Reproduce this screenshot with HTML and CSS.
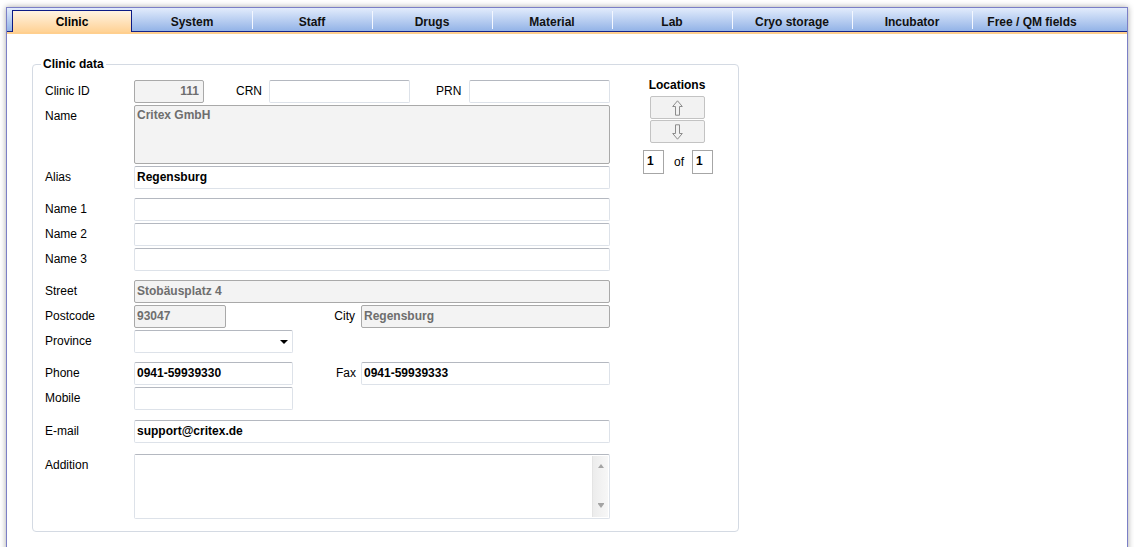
FILE: index.html
```html
<!DOCTYPE html>
<html>
<head>
  <title>Clinic settings</title>
  <meta charset="UTF-8">
  <link rel="stylesheet" href="styles.css">
</head>
<body>
  <div class="window">
    <!-- tabs -->
    <div class="tabbar">
      <div class="tab active">Clinic</div>
      <div class="tab">System</div>
      <div class="tab sep">Staff</div>
      <div class="tab sep">Drugs</div>
      <div class="tab sep">Material</div>
      <div class="tab sep">Lab</div>
      <div class="tab sep">Cryo storage</div>
      <div class="tab sep">Incubator</div>
      <div class="tab sep">Free / QM fields</div>
    </div>
    <div class="tabline"></div>

    <div class="page">
      <div class="group">
        <span class="legend">Clinic data</span>

        <div class="form">
          <div class="row">
            <label class="lbl">Clinic ID</label>
            <input class="field w-id" value="111" disabled>
            <span class="sublbl crn">CRN</span>
            <input class="field w-mid">
            <span class="sublbl prn">PRN</span>
            <input class="field w-mid">
          </div>
          <div class="row">
            <label class="lbl">Name</label>
            <textarea class="field w-full name-box" disabled>Critex GmbH</textarea>
          </div>
          <div class="row">
            <label class="lbl">Alias</label>
            <input class="field w-full" value="Regensburg">
          </div>

          <div class="row gap">
            <label class="lbl">Name 1</label>
            <input class="field w-full">
          </div>
          <div class="row">
            <label class="lbl">Name 2</label>
            <input class="field w-full">
          </div>
          <div class="row">
            <label class="lbl">Name 3</label>
            <input class="field w-full">
          </div>

          <div class="row gap">
            <label class="lbl">Street</label>
            <input class="field w-full" value="Stobäusplatz 4" disabled>
          </div>
          <div class="row">
            <label class="lbl">Postcode</label>
            <input class="field w-post" value="93047" disabled>
            <span class="sublbl right city">City</span>
            <input class="field w-wide" value="Regensburg" disabled>
          </div>
          <div class="row">
            <label class="lbl">Province</label>
            <div class="combo">
              <select class="field w-half">
                <option></option>
              </select>
            </div>
          </div>

          <div class="row gap">
            <label class="lbl">Phone</label>
            <input class="field w-half" value="0941-59939330">
            <span class="sublbl right">Fax</span>
            <input class="field w-wide" value="0941-59939333">
          </div>
          <div class="row">
            <label class="lbl">Mobile</label>
            <input class="field w-half">
          </div>

          <div class="row gap-mail">
            <label class="lbl">E-mail</label>
            <input class="field w-full" value="support@critex.de">
          </div>

          <div class="row gap-add">
            <label class="lbl">Addition</label>
            <div class="memo">
              <textarea></textarea>
              <div class="scroll">
                <span class="arr-up"></span>
                <span class="arr-down"></span>
              </div>
            </div>
          </div>
        </div>

        <!-- record navigator -->
        <div class="locations">
          <div class="loc-title">Locations</div>
          <button class="loc-btn">
            <svg width="11" height="16" viewBox="0 0 11 16"><path d="M5.5 0.8 L10.3 6.5 H7.5 V15.2 H3.5 V6.5 H0.7 Z" fill="none" stroke="#8c8c8c"/></svg>
          </button>
          <button class="loc-btn next">
            <svg width="11" height="16" viewBox="0 0 11 16"><path d="M5.5 15.2 L10.3 9.5 H7.5 V0.8 H3.5 V9.5 H0.7 Z" fill="none" stroke="#8c8c8c"/></svg>
          </button>
          <div class="counter">
            <input class="num" value="1">
            <span class="of">of</span>
            <input class="num" value="1">
          </div>
        </div>
      </div>
    </div>
  </div>
</body>
</html>
```

FILE: styles.css
```css
body {
  margin: 0;
  background: #fff;
  font-family: "Liberation Sans", Arial, sans-serif;
  font-size: 12px;
  color: #000;
  overflow: hidden;
}

.window {
  margin: 7px 0 0 6px;
  width: 1122px;
  height: 560px;
  box-sizing: border-box;
  border: 1px solid #7b7fc6;
  border-bottom: none;
  background: #fff;
  box-shadow: 0 0 6px rgba(0, 0, 0, 0.35);
}

/* tab strip */
.tabbar {
  display: flex;
  height: 23px;
  padding-left: 5px;
  background: linear-gradient(#e2ecfc, #93b3e7);
  border-bottom: 1px solid #14238a;
}
.tab {
  position: relative;
  width: 120px;
  box-sizing: border-box;
  margin: 2px 0 -1px;
  padding-top: 1px;
  text-align: center;
  font-weight: bold;
  line-height: 22px;
  color: #111;
}
.tab.active {
  padding-top: 0;
  background: linear-gradient(#fff3e2, #ffd295);
  border: 1px solid #0b1a85;
  border-bottom: 0;
  color: #000;
}
.tab.sep::before {
  content: "";
  position: absolute;
  left: 0;
  top: 1px;
  bottom: 3px;
  width: 1px;
  background: #f3f7ff;
}
.tabline { height: 2px; background: #ffcf8e; }

.page { padding: 30px 0 0 25px; }

.group {
  position: relative;
  display: flex;
  width: 707px;
  box-sizing: border-box;
  border: 1px solid #d4dae3;
  border-radius: 4px;
  padding: 15px 0 10px 12px;
}
.legend {
  position: absolute;
  top: -8px;
  left: 8px;
  padding: 0 2px;
  background: #fff;
  font-weight: bold;
  line-height: 14px;
}

/* form rows */
.form { display: flex; flex-direction: column; width: 565px; flex-shrink: 0; }
.row { display: flex; align-items: flex-start; margin-bottom: 2px; }
.row.gap { margin-top: 7px; }
.row.gap-mail { margin-top: 8px; }
.row.gap-add { margin-top: 9px; }
.lbl { width: 89px; flex-shrink: 0; line-height: 22px; }
.sublbl { line-height: 22px; box-sizing: border-box; }
.sublbl.crn { width: 65px; padding-left: 32px; }
.sublbl.prn { width: 59px; padding-left: 26px; }
.sublbl.right { flex: 1; text-align: right; padding-right: 5px; }
.sublbl.city { padding-right: 6px; }

.field {
  box-sizing: border-box;
  height: 23px;
  margin: 0;
  padding: 0 2px 1px;
  border: 1px solid #dde2e9;
  border-top-color: #b4b8c0;
  border-radius: 2px;
  background: #fff;
  font: bold 12px "Liberation Sans", Arial, sans-serif;
  color: #000;
  outline: none;
}
.field:disabled {
  background: #f3f3f3;
  border-color: #a9a9a9;
  color: #6e6e6e;
  -webkit-text-fill-color: #6e6e6e;
}
.w-full { width: 476px; }
.w-id { width: 70px; text-align: right; padding-right: 4px; }
.w-mid { width: 141px; }
.w-half { width: 159px; }
.w-post { width: 92px; }
.w-wide { width: 249px; }

.name-box {
  height: 59px;
  padding: 2px 2px;
  line-height: 14px;
  resize: none;
}

.combo { position: relative; }
.combo select { appearance: none; -webkit-appearance: none; }
.combo::after {
  content: "";
  position: absolute;
  right: 5px;
  top: 10px;
  border-left: 4px solid transparent;
  border-right: 4px solid transparent;
  border-top: 4px solid #000;
}

.memo {
  display: flex;
  width: 476px;
  height: 65px;
  box-sizing: border-box;
  border: 1px solid #dde2e9;
  border-top-color: #b4b8c0;
  border-radius: 2px;
}
.memo textarea {
  flex: 1;
  border: 0;
  margin: 0;
  resize: none;
  outline: none;
  font: bold 12px "Liberation Sans", Arial, sans-serif;
}
.scroll {
  width: 15px;
  margin: 1px 1px 1px 0;
  background: linear-gradient(90deg, #ececec, #f7f7f7);
  border-left: 1px solid #e4e4e4;
  display: flex;
  flex-direction: column;
  align-items: center;
  justify-content: space-between;
  padding: 8px 0 9px;
}
.arr-up, .arr-down { width: 0; height: 0; border-left: 3px solid transparent; border-right: 3px solid transparent; }
.arr-up { border-bottom: 4px solid #a4a4a4; }
.arr-down { border-top: 4px solid #a4a4a4; box-shadow: 0 -1px 0 0 #a4a4a4; }

/* locations navigator */
.locations { width: 74px; margin-left: 30px; text-align: center; }
.loc-title { font-weight: bold; line-height: 14px; margin-top: -2px; }
.loc-btn {
  display: flex;
  align-items: center;
  justify-content: center;
  width: 55px;
  height: 23px;
  margin: 4px auto 0;
  padding: 0;
  border: 1px solid #c3c3c3;
  border-radius: 2px;
  background: #f2f2f2;
}
.loc-btn.next { margin-top: 1px; }
.counter { display: flex; align-items: center; margin-top: 7px; padding-left: 3px; }
.num {
  width: 21px;
  height: 24px;
  box-sizing: border-box;
  margin: 0;
  padding: 0 0 3px 3px;
  border: 1px solid #a6a6a6;
  font: bold 12px "Liberation Sans", Arial, sans-serif;
  color: #000;
}
.of { margin: 0 8px 0 10px; }
```
